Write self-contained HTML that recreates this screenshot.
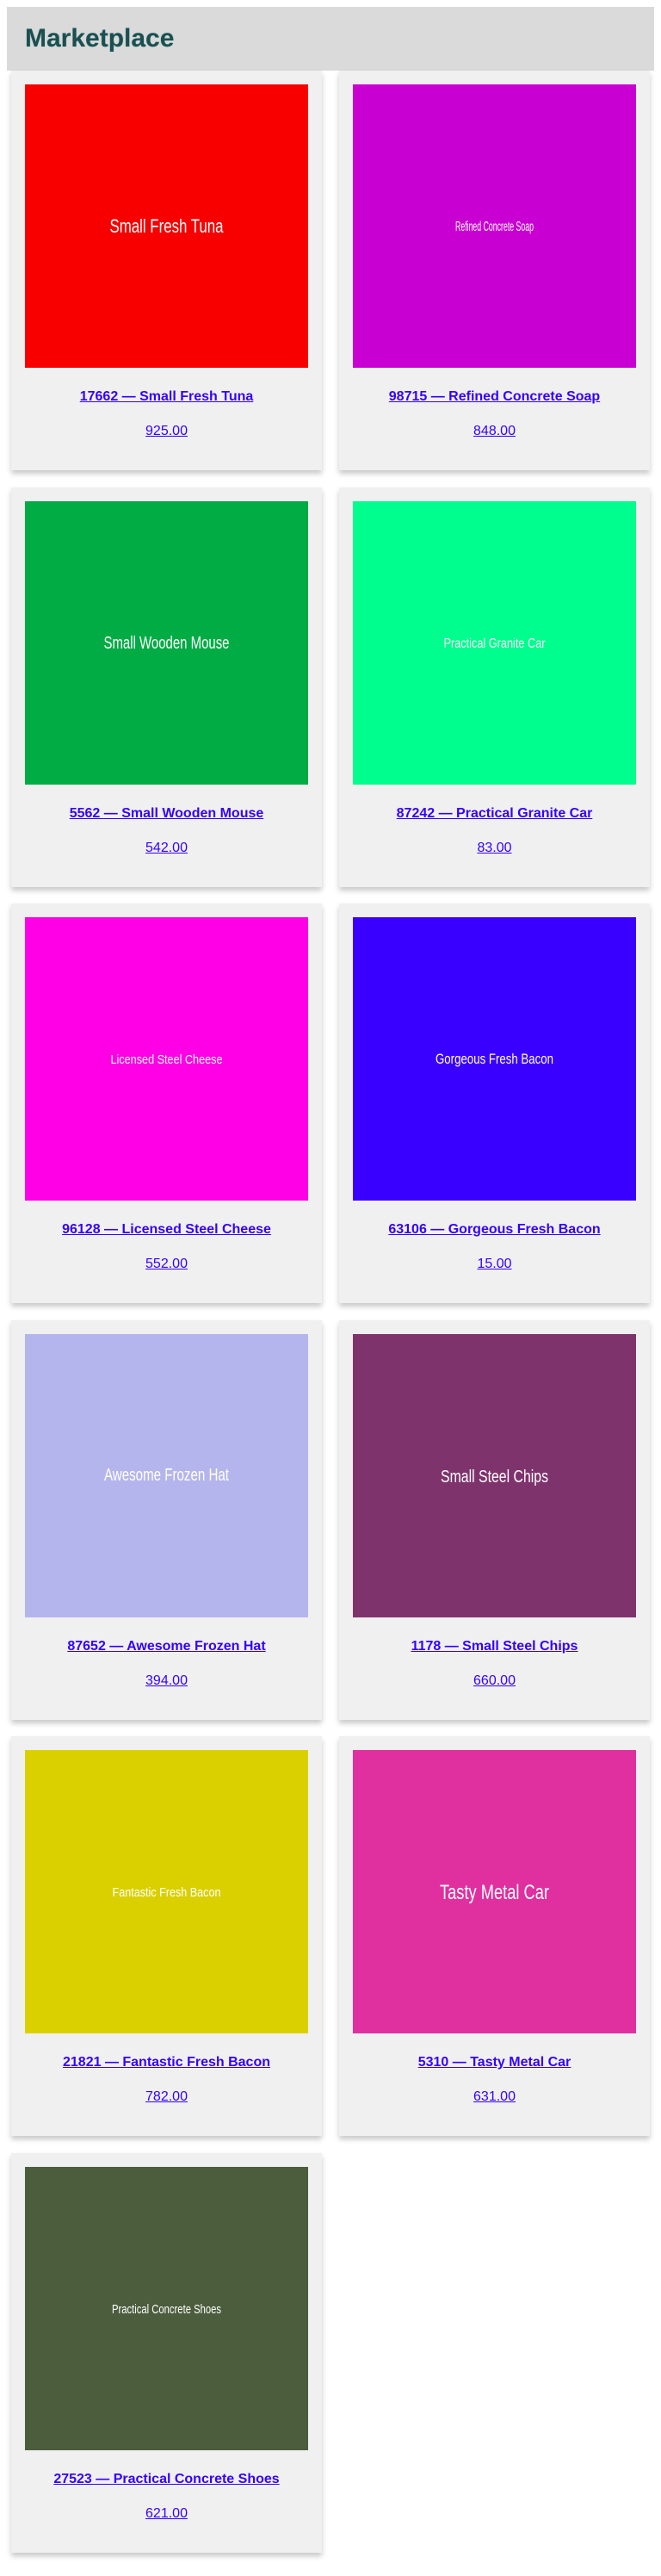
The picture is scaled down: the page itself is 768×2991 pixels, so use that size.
<!DOCTYPE html>
<html><head><meta charset="utf-8">
<style>
html,body{margin:0;padding:0;background:#fff;}
body{width:768px;height:2991px;position:relative;font-family:"Liberation Sans",Arial,sans-serif;overflow:hidden;}
.hdr{position:absolute;left:8px;top:8px;width:752px;height:74px;background:#dadada;}
.hdr h1{margin:0;position:absolute;left:21px;top:22px;font-size:30px;line-height:30px;font-weight:bold;color:#1d4f50;text-shadow:0 0 1px #6aa;}
.card{position:absolute;width:361px;height:464px;background:#f0f0f0;box-shadow:0 4px 6px rgba(0,0,0,0.22);}
.card svg{position:absolute;left:16px;top:16px;}
.t{position:absolute;left:0;width:361px;text-align:center;top:369px;font-size:16px;line-height:20px;font-weight:bold;}
.p{position:absolute;left:0;width:361px;text-align:center;top:409px;font-size:16px;line-height:20px;}
a{color:#3300ff;text-decoration:underline;}
</style></head><body>
<div class="hdr"><h1>Marketplace</h1></div>

<div class="card" style="left:13px;top:82px"><svg width="329" height="329"><rect width="329" height="329" fill="#f80000"/><text x="164.5" y="172" fill="#fff" font-size="22" text-anchor="middle" textLength="132" lengthAdjust="spacingAndGlyphs" font-family="Liberation Sans">Small Fresh Tuna</text></svg><div class="t"><a>17662 — Small Fresh Tuna</a></div><div class="p"><a>925.00</a></div></div>
<div class="card" style="left:394px;top:82px"><svg width="329" height="329"><rect width="329" height="329" fill="#c800d2"/><text x="164.5" y="170" fill="#fff" font-size="16" text-anchor="middle" textLength="91" lengthAdjust="spacingAndGlyphs" font-family="Liberation Sans">Refined Concrete Soap</text></svg><div class="t"><a>98715 — Refined Concrete Soap</a></div><div class="p"><a>848.00</a></div></div>

<div class="card" style="left:13px;top:566px"><svg width="329" height="329"><rect width="329" height="329" fill="#00ac43"/><text x="164.5" y="171" fill="#fff" font-size="20" text-anchor="middle" textLength="146" lengthAdjust="spacingAndGlyphs" font-family="Liberation Sans">Small Wooden Mouse</text></svg><div class="t"><a>5562 — Small Wooden Mouse</a></div><div class="p"><a>542.00</a></div></div>
<div class="card" style="left:394px;top:566px"><svg width="329" height="329"><rect width="329" height="329" fill="#00fe8e"/><text x="164.5" y="170" fill="#fff" font-size="16" text-anchor="middle" textLength="118" lengthAdjust="spacingAndGlyphs" font-family="Liberation Sans">Practical Granite Car</text></svg><div class="t"><a>87242 — Practical Granite Car</a></div><div class="p"><a>83.00</a></div></div>

<div class="card" style="left:13px;top:1049px"><svg width="329" height="329"><rect width="329" height="329" fill="#ff00e6"/><text x="164.5" y="170" fill="#fff" font-size="15" text-anchor="middle" textLength="130" lengthAdjust="spacingAndGlyphs" font-family="Liberation Sans">Licensed Steel Cheese</text></svg><div class="t"><a>96128 — Licensed Steel Cheese</a></div><div class="p"><a>552.00</a></div></div>
<div class="card" style="left:394px;top:1049px"><svg width="329" height="329"><rect width="329" height="329" fill="#3a00ff"/><text x="164.5" y="170" fill="#fff" font-size="17" text-anchor="middle" textLength="137" lengthAdjust="spacingAndGlyphs" font-family="Liberation Sans">Gorgeous Fresh Bacon</text></svg><div class="t"><a>63106 — Gorgeous Fresh Bacon</a></div><div class="p"><a>15.00</a></div></div>

<div class="card" style="left:13px;top:1533px"><svg width="329" height="329"><rect width="329" height="329" fill="#b5b5ed"/><text x="164.5" y="170" fill="#fff" font-size="20" text-anchor="middle" textLength="145" lengthAdjust="spacingAndGlyphs" font-family="Liberation Sans">Awesome Frozen Hat</text></svg><div class="t"><a>87652 — Awesome Frozen Hat</a></div><div class="p"><a>394.00</a></div></div>
<div class="card" style="left:394px;top:1533px"><svg width="329" height="329"><rect width="329" height="329" fill="#7f336d"/><text x="164.5" y="172" fill="#fff" font-size="20" text-anchor="middle" textLength="125" lengthAdjust="spacingAndGlyphs" font-family="Liberation Sans">Small Steel Chips</text></svg><div class="t"><a>1178 — Small Steel Chips</a></div><div class="p"><a>660.00</a></div></div>

<div class="card" style="left:13px;top:2016px"><svg width="329" height="329"><rect width="329" height="329" fill="#dad000"/><text x="164.5" y="170" fill="#fff" font-size="15" text-anchor="middle" textLength="126" lengthAdjust="spacingAndGlyphs" font-family="Liberation Sans">Fantastic Fresh Bacon</text></svg><div class="t"><a>21821 — Fantastic Fresh Bacon</a></div><div class="p"><a>782.00</a></div></div>
<div class="card" style="left:394px;top:2016px"><svg width="329" height="329"><rect width="329" height="329" fill="#e02f9f"/><text x="164.5" y="173" fill="#fff" font-size="24" text-anchor="middle" textLength="127" lengthAdjust="spacingAndGlyphs" font-family="Liberation Sans">Tasty Metal Car</text></svg><div class="t"><a>5310 — Tasty Metal Car</a></div><div class="p"><a>631.00</a></div></div>

<div class="card" style="left:13px;top:2500px"><svg width="329" height="329"><rect width="329" height="329" fill="#4b5d3d"/><text x="164.5" y="170" fill="#fff" font-size="15" text-anchor="middle" textLength="127" lengthAdjust="spacingAndGlyphs" font-family="Liberation Sans">Practical Concrete Shoes</text></svg><div class="t"><a>27523 — Practical Concrete Shoes</a></div><div class="p"><a>621.00</a></div></div>
</body></html>
